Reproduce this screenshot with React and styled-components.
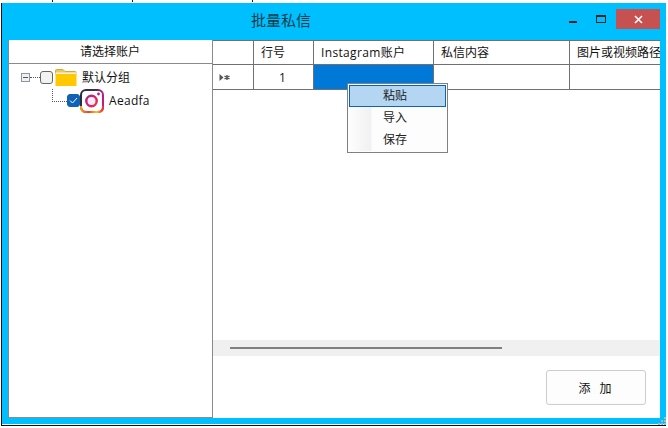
import React from "react";
import styled, { createGlobalStyle } from "styled-components";

const GlobalStyle = createGlobalStyle`
  html, body {
    margin: 0;
    padding: 0;
    background: #fff;
  }
  body {
    width: 668px;
    height: 428px;
    overflow: hidden;
    font-family: "Open Sans", "Noto Sans CJK SC", sans-serif;
    font-size: 12px;
    color: #111;
  }
`;

const Page = styled.div`
  width: 668px;
  height: 428px;
  box-sizing: border-box;
  padding: 3px 2px 2px 1px;
  background: #fff;
  position: relative;
`;
const BehindLines = styled.div`
  position: absolute;
  top: 0;
  left: 0;
  width: 668px;
  height: 3px;
  display: flex;
`;
const BehindTick = styled.div`
  width: 1px;
  height: 2px;
  background: #222;
  margin-left: ${(p) => p.$gap}px;
`;
const Frame = styled.div`
  height: 100%;
  box-sizing: border-box;
  background: #00bfff;
  border-left: 1px solid #111;
  border-bottom: 1px solid #111;
  box-shadow: inset 0 -1px 0 #fff;
  padding: 0 6px 7px 6px;
  display: flex;
  flex-direction: column;
  position: relative;
`;
const TitleBar = styled.div`
  height: 37px;
  flex: none;
  display: flex;
  align-items: flex-start;
`;
const Title = styled.div`
  margin-left: 243px;
  margin-top: 7px;
  font-size: 15px;
  line-height: 21px;
  color: #0f3d47;
  width: 318px;
`;
const MinBtn = styled.div`
  width: 8px;
  height: 2px;
  background: #222;
  margin-top: 18px;
`;
const MaxBtn = styled.div`
  width: 8px;
  height: 5px;
  border: 1px solid #222;
  border-top-width: 2px;
  margin-top: 12px;
  margin-left: 19px;
`;
const CloseBtn = styled.div`
  width: 44px;
  height: 20px;
  background: #c75050;
  color: #fff;
  margin-top: 6px;
  margin-left: 10px;
  display: flex;
  align-items: center;
  justify-content: center;
`;
const Body = styled.div`
  flex: 1;
  min-height: 0;
  display: flex;
  background: #fff;
`;
const LeftPanel = styled.div`
  width: 205px;
  flex: none;
  box-sizing: border-box;
  border-right: 1px solid #8a8a8a;
  border-bottom: 1px solid #8a8a8a;
  border-left: 1px solid #8a8a8a;
  display: flex;
  flex-direction: column;
`;
const PanelHead = styled.div`
  height: 23px;
  line-height: 23px;
  text-align: center;
  font-size: 12px;
  border-bottom: 1px solid #8a8a8a;
  flex: none;
  margin-left: -1px;
`;
const Tree = styled.div`
  padding-top: 5px;
  display: flex;
  flex-direction: column;
`;
const RootRow = styled.div`
  height: 17px;
  display: flex;
  align-items: center;
  padding-left: 12px;
`;
const ChildRow = styled.div`
  height: 24px;
  margin-top: 3px;
  display: flex;
  align-items: flex-start;
  padding-left: 43px;
`;
const Expander = styled.div`
  width: 9px;
  height: 9px;
  box-sizing: border-box;
  border: 1px solid #8f96a3;
  background: #eef0f4;
  display: flex;
  align-items: center;
  justify-content: center;
  &::after {
    content: "";
    width: 5px;
    height: 1px;
    background: #555;
  }
`;
const DotLine = styled.div`
  width: 10px;
  border-top: 1px dotted #555;
`;
const Elbow = styled.div`
  width: 14px;
  height: 12px;
  border-left: 1px dotted #555;
  border-bottom: 1px dotted #555;
  flex: none;
`;
const Check = styled.div`
  width: 13px;
  height: 13px;
  box-sizing: border-box;
  flex: none;
  border-radius: 3px;
  border: 1px solid ${(p) => (p.$on ? "#0f62b5" : "#666")};
  background: ${(p) => (p.$on ? "#0f62b5" : "#f2f2f2")};
  display: flex;
  align-items: center;
  justify-content: center;
  margin-top: ${(p) => (p.$on ? "5px" : "0")};
`;
const FolderWrap = styled.div`
  margin-left: 2px;
  height: 17px;
`;
const Label = styled.span`
  margin-left: ${(p) => p.$gap}px;
  font-size: 12px;
  line-height: 17px;
  white-space: nowrap;
`;
const IconLabel = styled(Label)`
  line-height: 24px;
  letter-spacing: 0.3px;
`;
const RightPanel = styled.div`
  flex: 1;
  min-width: 0;
  display: flex;
  flex-direction: column;
  position: relative;
`;
const Grid = styled.div`
  height: 300px;
  flex: none;
  overflow: hidden;
`;
const GridRow = styled.div`
  display: flex;
  height: ${(p) => p.$h}px;
  box-sizing: border-box;
  border-top: ${(p) => (p.$first ? "1px solid #707070" : "0")};
  border-bottom: 1px solid #707070;
  width: 560px;
`;
const Cell = styled.div`
  width: ${(p) => p.$w}px;
  flex: none;
  box-sizing: border-box;
  border-right: 1px solid #707070;
  font-size: 12px;
  line-height: 23px;
  white-space: nowrap;
  padding-left: ${(p) => p.$pad || 0}px;
  letter-spacing: ${(p) => p.$track || 0}px;
  background: ${(p) => (p.$selected ? "#0078d7" : "transparent")};
  display: flex;
  align-items: center;
`;
const Marker = styled.span`
  margin-left: 6px;
  display: flex;
  align-items: center;
`;
const ScrollTrack = styled.div`
  height: 16px;
  background: #f0f0f0;
  flex: none;
  display: flex;
  align-items: center;
  padding-left: 17px;
`;
const ScrollThumb = styled.div`
  width: 272px;
  height: 2px;
  background: #808080;
`;
const Footer = styled.div`
  flex: 1;
  display: flex;
  justify-content: flex-end;
  padding: 14px 14px 0 0;
`;
const AddButton = styled.button`
  width: 100px;
  height: 35px;
  box-sizing: border-box;
  border: 1px solid #ccc;
  border-radius: 3px;
  background: #fdfdfd;
  font: inherit;
  font-size: 12px;
  color: #111;
  padding: 0 2px 0 0;
  word-spacing: 6px;
`;
const Menu = styled.div`
  position: absolute;
  left: 134px;
  top: 43px;
  width: 101px;
  height: 70px;
  box-sizing: border-box;
  border: 1px solid #808080;
  background: #fdfdfd;
  padding: 1px;
`;
const MenuItem = styled.div`
  height: 22px;
  box-sizing: border-box;
  font-size: 12px;
  line-height: ${(p) => (p.$active ? 20 : 22)}px;
  padding-left: ${(p) => (p.$active ? 33 : 34)}px;
  color: #222;
  background: ${(p) =>
    p.$active
      ? "#b5d6f2"
      : "linear-gradient(90deg, #fdfdfd 0, #f1f1f1 22px, #fdfdfd 23px)"};
  border: ${(p) => (p.$active ? "1px solid #0f62b5" : "0")};
`;
const Grip = styled.div`
  position: absolute;
  right: 0;
  bottom: 0;
  line-height: 0;
`;

const FolderIcon = () => (
  <svg width="22" height="17" viewBox="0 0 22 17">
    <path d="M0.5 1.5 Q0.5 0.5 1.5 0.5 L8 0.5 L10 2.5 L20 2.5 Q21 2.5 21 3.5 L21 5 L0.5 5 Z" fill="#e8c66a" stroke="#d3a843" strokeWidth="1" />
    <path d="M0.5 3.5 L21 3.5 L21 5 L0.5 5 Z" fill="#fff4d2" />
    <rect x="0.5" y="5" width="21" height="12" fill="#ffc800" />
  </svg>
);

const InstagramIcon = () => (
  <svg width="25" height="25" viewBox="0 0 25 25">
    <defs>
      <linearGradient id="igTop" x1="0" y1="0" x2="1" y2="0.3">
        <stop offset="0" stopColor="#2a2a35" />
        <stop offset="0.55" stopColor="#3a2f55" />
        <stop offset="1" stopColor="#c2188a" />
      </linearGradient>
      <linearGradient id="igBottom" x1="0" y1="0" x2="1" y2="0">
        <stop offset="0" stopColor="#f2a11e" />
        <stop offset="0.35" stopColor="#f23b2a" />
        <stop offset="0.7" stopColor="#ffc21e" />
        <stop offset="1" stopColor="#e8303a" />
      </linearGradient>
      <linearGradient id="igRing" x1="0" y1="0" x2="1" y2="1">
        <stop offset="0" stopColor="#9a2a90" />
        <stop offset="0.5" stopColor="#e01a70" />
        <stop offset="1" stopColor="#e8344a" />
      </linearGradient>
    </defs>
    <rect x="1" y="1" width="22" height="22" rx="5" fill="#fff" stroke="url(#igTop)" strokeWidth="2" />
    <path d="M1 17 L1 18 Q1 23 6 23 L18 23 Q23 23 23 18 L23 17" fill="none" stroke="url(#igBottom)" strokeWidth="2" />
    <circle cx="11.5" cy="12" r="5.2" fill="#f4eef2" stroke="url(#igRing)" strokeWidth="2.4" />
    <circle cx="18.5" cy="5" r="1.4" fill="#a8247e" />
  </svg>
);

const App = () => {
  return (
    <>
      <GlobalStyle />
      <Page>
        <BehindLines>
          <BehindTick $gap={52} />
          <BehindTick $gap={79} />
          <BehindTick $gap={119} />
        </BehindLines>
        <Frame>
          <TitleBar>
            <Title>批量私信</Title>
            <MinBtn />
            <MaxBtn />
            <CloseBtn>
              <svg width="9" height="9" viewBox="0 0 9 9">
                <path d="M1 1 L8 8 M8 1 L1 8" stroke="#fff" strokeWidth="1.6" />
              </svg>
            </CloseBtn>
          </TitleBar>
          <Body>
            <LeftPanel>
              <PanelHead>请选择账户</PanelHead>
              <Tree>
                <RootRow>
                  <Expander />
                  <DotLine />
                  <Check />
                  <FolderWrap>
                    <FolderIcon />
                  </FolderWrap>
                  <Label $gap={5}>默认分组</Label>
                </RootRow>
                <ChildRow>
                  <Elbow />
                  <Check $on>
                    <svg width="9" height="7" viewBox="0 0 9 7">
                      <path d="M1 3.5 L3.5 6 L8 1" fill="none" stroke="#fff" strokeWidth="1" />
                    </svg>
                  </Check>
                  <InstagramIcon />
                  <IconLabel $gap={4}>Aeadfa</IconLabel>
                </ChildRow>
              </Tree>
            </LeftPanel>
            <RightPanel>
              <Grid>
                <GridRow $first $h={25}>
                  <Cell $w={41} />
                  <Cell $w={60} $pad={7}>行号</Cell>
                  <Cell $w={120} $pad={7} $track={0.35}>Instagram账户</Cell>
                  <Cell $w={136} $pad={7}>私信内容</Cell>
                  <Cell $w={200} $pad={7}>图片或视频路径</Cell>
                </GridRow>
                <GridRow $h={25}>
                  <Cell $w={41}>
                    <Marker>
                      <svg width="12" height="7" viewBox="0 0 12 7">
                        <path d="M0.5 0 L4.5 3.5 L0.5 7 Z" fill="#555" />
                        <path d="M5.5 2 L10.5 5 M10.5 2 L5.5 5 M8 1 L8 6" stroke="#555" strokeWidth="1.4" />
                      </svg>
                    </Marker>
                  </Cell>
                  <Cell $w={60} $pad={25}>1</Cell>
                  <Cell $w={120} $selected />
                  <Cell $w={136} />
                  <Cell $w={200} />
                </GridRow>
              </Grid>
              <ScrollTrack>
                <ScrollThumb />
              </ScrollTrack>
              <Footer>
                <AddButton>添 加</AddButton>
              </Footer>
              <Menu>
                <MenuItem $active>粘贴</MenuItem>
                <MenuItem>导入</MenuItem>
                <MenuItem>保存</MenuItem>
              </Menu>
            </RightPanel>
          </Body>
          <Grip>
            <svg width="8" height="8" viewBox="0 0 8 8" fill="#a8b8c0">
              <rect x="6" y="0" width="2" height="2" />
              <rect x="3" y="3" width="2" height="2" />
              <rect x="6" y="3" width="2" height="2" />
              <rect x="0" y="6" width="2" height="2" />
              <rect x="3" y="6" width="2" height="2" />
              <rect x="6" y="6" width="2" height="2" />
            </svg>
          </Grip>
        </Frame>
      </Page>
    </>
  );
};

export default App;
